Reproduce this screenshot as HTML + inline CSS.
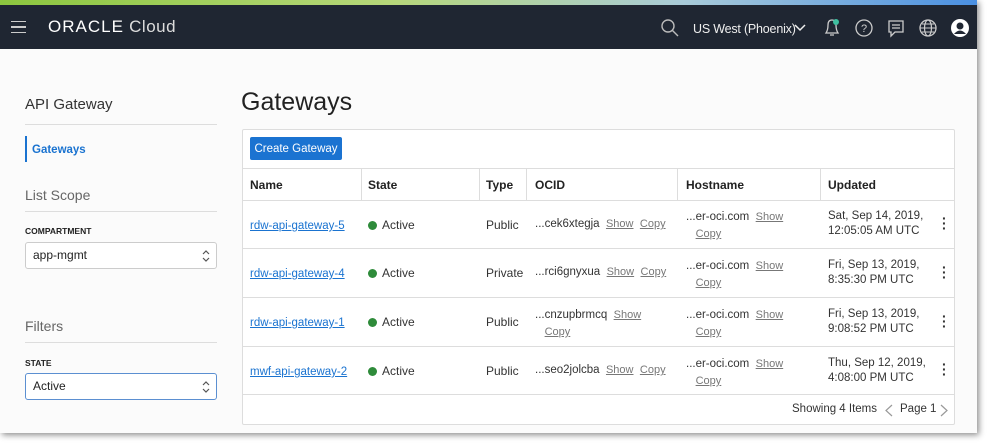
<!DOCTYPE html><html><head><style>
body{margin:0;width:989px;height:445px;background:#fff;font-family:"Liberation Sans",sans-serif;position:relative;overflow:hidden}
.frame{position:absolute;left:0;top:0;width:977px;height:433px;background:#fbfbfb;box-shadow:2px 2px 6px rgba(0,0,0,.45)}
.grad{position:absolute;left:0;top:0;width:977px;height:5px;background:linear-gradient(90deg,#8cc63f,#b6d77a 40%,#a9cbd9 70%,#4a90e2)}
.nav{position:absolute;left:0;top:5px;width:977px;height:44px;background:#1f2632;color:#fff}
.a{position:absolute}
.t{position:absolute;font-size:12px;color:#333}
.hd{font-weight:bold;font-size:12px;color:#222}
.lnk{color:#1a73d0;text-decoration:underline;font-size:11.5px}
.sm{color:#777;text-decoration:underline;font-size:11px}
.dot{display:inline-block;width:9px;height:9px;border-radius:50%;background:#2e8b3a;margin-right:5px;vertical-align:-1px}
.hl{position:absolute;height:1px;background:#ddd}
.vl{position:absolute;width:1px;background:#ddd}
.sel{position:absolute;left:25px;width:190px;height:25px;border:1px solid #ccc;border-radius:3px;background:#fff;font-size:12px;line-height:25px;text-indent:7px;color:#222}
.sel svg{position:absolute;right:6px;top:7px}
</style></head><body>
<div class="frame">
<div class="grad"></div>
<div class="nav">
 <div class="a" style="left:11px;top:16px;width:15px;height:12px;border-top:1.5px solid #ccc;border-bottom:1.5px solid #ccc;box-sizing:border-box"></div>
 <div class="a" style="left:11px;top:21px;width:15px;height:1.5px;background:#ccc"></div>
 <div class="a" style="left:48px;top:12px;font-size:17px;letter-spacing:0.5px"><b style="font-weight:normal;letter-spacing:1px">ORACLE</b> <span style="font-weight:300;color:#ddd">Cloud</span></div>
 <svg class="a" style="left:660px;top:13px" width="20" height="20"><circle cx="8" cy="8" r="6" fill="none" stroke="#bbb" stroke-width="1.4"/><line x1="12.5" y1="12.5" x2="18" y2="18" stroke="#bbb" stroke-width="1.4"/></svg>
 <div class="a" style="left:693px;top:17px;font-size:12.5px;color:#eee;letter-spacing:-0.2px">US West (Phoenix)</div>
 <svg class="a" style="left:794px;top:19px" width="12" height="8"><path d="M1 1 L6 6 L11 1" fill="none" stroke="#eee" stroke-width="1.5"/></svg>
 <svg class="a" style="left:822px;top:12px" width="20" height="22"><path d="M4 16 Q6 13 6 8 Q6 3 10 3 Q14 3 14 8 Q14 13 16 16 Z M8 18 L12 18" fill="none" stroke="#ccc" stroke-width="1.3"/><circle cx="14" cy="5" r="3" fill="#3fbfa0"/></svg>
 <svg class="a" style="left:854px;top:13px" width="20" height="20"><circle cx="10" cy="10" r="8" fill="none" stroke="#ccc" stroke-width="1.3"/><text x="10" y="14" font-size="11" fill="#ccc" text-anchor="middle" font-family="Liberation Sans">?</text></svg>
 <svg class="a" style="left:886px;top:13px" width="20" height="20"><path d="M3 3 H17 V14 H9 L5 18 V14 H3 Z M6 7 H14 M6 10 H14" fill="none" stroke="#ccc" stroke-width="1.3"/></svg>
 <svg class="a" style="left:918px;top:13px" width="20" height="20"><circle cx="10" cy="10" r="8" fill="none" stroke="#ccc" stroke-width="1.3"/><ellipse cx="10" cy="10" rx="3.5" ry="8" fill="none" stroke="#ccc" stroke-width="1.2"/><path d="M2 10 H18 M4 6 H16 M4 14 H16" stroke="#ccc" stroke-width="1.1"/></svg>
 <svg class="a" style="left:950px;top:13px" width="20" height="20"><circle cx="10" cy="10" r="9" fill="#fff"/><circle cx="10" cy="8" r="3.5" fill="#1f2632"/><path d="M4 16 Q10 9 16 16" fill="#1f2632"/></svg>
</div>
<div class="t" style="left:25px;top:96px;font-size:15px;color:#333;font-weight:300">API Gateway</div>
<div class="hl" style="left:25px;top:124px;width:192px"></div>
<div class="a" style="left:25px;top:136px;width:2px;height:26px;background:#1a73d0"></div>
<div class="t" style="left:32px;top:144px;font-size:11.5px;color:#1a73d0;font-weight:bold">Gateways</div>
<div class="t" style="left:25px;top:187px;font-size:14px;color:#666">List Scope</div>
<div class="hl" style="left:25px;top:211px;width:192px"></div>
<div class="t" style="left:25px;top:226px;font-size:8.5px;font-weight:bold;color:#222">COMPARTMENT</div>
<div class="sel" style="top:242px">app-mgmt<svg width="8" height="12"><path d="M1 4 L4 1 L7 4 M1 8 L4 11 L7 8" fill="none" stroke="#555" stroke-width="1.2"/></svg></div>
<div class="t" style="left:25px;top:318px;font-size:14px;color:#666">Filters</div>
<div class="hl" style="left:25px;top:342px;width:192px"></div>
<div class="t" style="left:25px;top:358px;font-size:8.5px;font-weight:bold;color:#222">STATE</div>
<div class="sel" style="top:373px;border-color:#5b8fd1">Active<svg width="8" height="12"><path d="M1 4 L4 1 L7 4 M1 8 L4 11 L7 8" fill="none" stroke="#555" stroke-width="1.2"/></svg></div>
<div class="t" style="left:241px;top:88px;font-size:25px;color:#222">Gateways</div>
<div class="a" style="left:242px;top:129px;width:711px;height:294px;border:1px solid #ddd;background:#fff;border-radius:2px"></div>
<div class="a" style="left:250px;top:137px;width:92px;height:23px;background:#1b73d1;border-radius:2px;color:#fff;font-size:11.5px;display:flex;align-items:center;justify-content:center">Create Gateway</div>
<div class="hl" style="left:243px;top:168px;width:711px"></div>
<div class="hl" style="left:243px;top:200px;width:711px"></div>
<div class="hl" style="left:243px;top:248px;width:711px"></div>
<div class="hl" style="left:243px;top:297px;width:711px"></div>
<div class="hl" style="left:243px;top:346px;width:711px"></div>
<div class="hl" style="left:243px;top:394px;width:711px"></div>
<div class="vl" style="left:361px;top:168px;height:32px"></div>
<div class="vl" style="left:479px;top:168px;height:32px"></div>
<div class="vl" style="left:526px;top:168px;height:32px"></div>
<div class="vl" style="left:677px;top:168px;height:32px"></div>
<div class="vl" style="left:820px;top:168px;height:32px"></div>
<div class="t hd" style="left:250px;top:178px">Name</div>
<div class="t hd" style="left:368px;top:178px">State</div>
<div class="t hd" style="left:486px;top:178px">Type</div>
<div class="t hd" style="left:535px;top:178px">OCID</div>
<div class="t hd" style="left:686px;top:178px">Hostname</div>
<div class="t hd" style="left:828px;top:178px">Updated</div>

<div class="t" style="left:250px;top:218px"><span class="lnk">rdw-api-gateway-5</span></div>
<div class="t" style="left:368px;top:218px"><span class="dot"></span>Active</div>
<div class="t" style="left:486px;top:218px">Public</div>
<div class="t" style="left:535px;top:218px;font-size:11.5px">...cek6xtegja &nbsp;<span class="sm">Show</span> &nbsp;<span class="sm">Copy</span></div>
<div class="t" style="left:686px;top:209px;font-size:11.5px;line-height:17px">...er-oci.com &nbsp;<span class="sm">Show</span><br>&nbsp;&nbsp;&nbsp;<span class="sm">Copy</span></div>
<div class="t" style="left:828px;top:209px;font-size:11.5px;line-height:15px">Sat, Sep 14, 2019,<br>12:05:05 AM UTC</div>

<div class="t" style="left:250px;top:266px"><span class="lnk">rdw-api-gateway-4</span></div>
<div class="t" style="left:368px;top:266px"><span class="dot"></span>Active</div>
<div class="t" style="left:486px;top:266px">Private</div>
<div class="t" style="left:535px;top:266px;font-size:11.5px">...rci6gnyxua &nbsp;<span class="sm">Show</span> &nbsp;<span class="sm">Copy</span></div>
<div class="t" style="left:686px;top:258px;font-size:11.5px;line-height:17px">...er-oci.com &nbsp;<span class="sm">Show</span><br>&nbsp;&nbsp;&nbsp;<span class="sm">Copy</span></div>
<div class="t" style="left:828px;top:258px;font-size:11.5px;line-height:15px">Fri, Sep 13, 2019,<br>8:35:30 PM UTC</div>

<div class="t" style="left:250px;top:315px"><span class="lnk">rdw-api-gateway-1</span></div>
<div class="t" style="left:368px;top:315px"><span class="dot"></span>Active</div>
<div class="t" style="left:486px;top:315px">Public</div>
<div class="t" style="left:535px;top:307px;font-size:11.5px;line-height:17px">...cnzupbrmcq &nbsp;<span class="sm">Show</span><br>&nbsp;&nbsp;&nbsp;<span class="sm">Copy</span></div>
<div class="t" style="left:686px;top:307px;font-size:11.5px;line-height:17px">...er-oci.com &nbsp;<span class="sm">Show</span><br>&nbsp;&nbsp;&nbsp;<span class="sm">Copy</span></div>
<div class="t" style="left:828px;top:307px;font-size:11.5px;line-height:15px">Fri, Sep 13, 2019,<br>9:08:52 PM UTC</div>

<div class="t" style="left:250px;top:364px"><span class="lnk">mwf-api-gateway-2</span></div>
<div class="t" style="left:368px;top:364px"><span class="dot"></span>Active</div>
<div class="t" style="left:486px;top:364px">Public</div>
<div class="t" style="left:535px;top:364px;font-size:11.5px">...seo2jolcba &nbsp;<span class="sm">Show</span> &nbsp;<span class="sm">Copy</span></div>
<div class="t" style="left:686px;top:356px;font-size:11.5px;line-height:17px">...er-oci.com &nbsp;<span class="sm">Show</span><br>&nbsp;&nbsp;&nbsp;<span class="sm">Copy</span></div>
<div class="t" style="left:828px;top:356px;font-size:11.5px;line-height:15px">Thu, Sep 12, 2019,<br>4:08:00 PM UTC</div>

<div class="t" style="left:942px;top:216px;font-weight:bold;line-height:5px;font-size:14px">·<br>·<br>·</div>
<div class="t" style="left:942px;top:265px;font-weight:bold;line-height:5px;font-size:14px">·<br>·<br>·</div>
<div class="t" style="left:942px;top:314px;font-weight:bold;line-height:5px;font-size:14px">·<br>·<br>·</div>
<div class="t" style="left:942px;top:362px;font-weight:bold;line-height:5px;font-size:14px">·<br>·<br>·</div>
<div class="t" style="left:792px;top:403px;font-size:11.5px">Showing 4 Items</div>
<svg class="a" style="left:885px;top:404px" width="8" height="13"><path d="M7 1 L1 6.5 L7 12" fill="none" stroke="#999" stroke-width="1.2"/></svg>
<div class="t" style="left:900px;top:403px;font-size:11.5px">Page 1</div>
<svg class="a" style="left:940px;top:404px" width="8" height="13"><path d="M1 1 L7 6.5 L1 12" fill="none" stroke="#999" stroke-width="1.2"/></svg>
</div>
</body></html>
